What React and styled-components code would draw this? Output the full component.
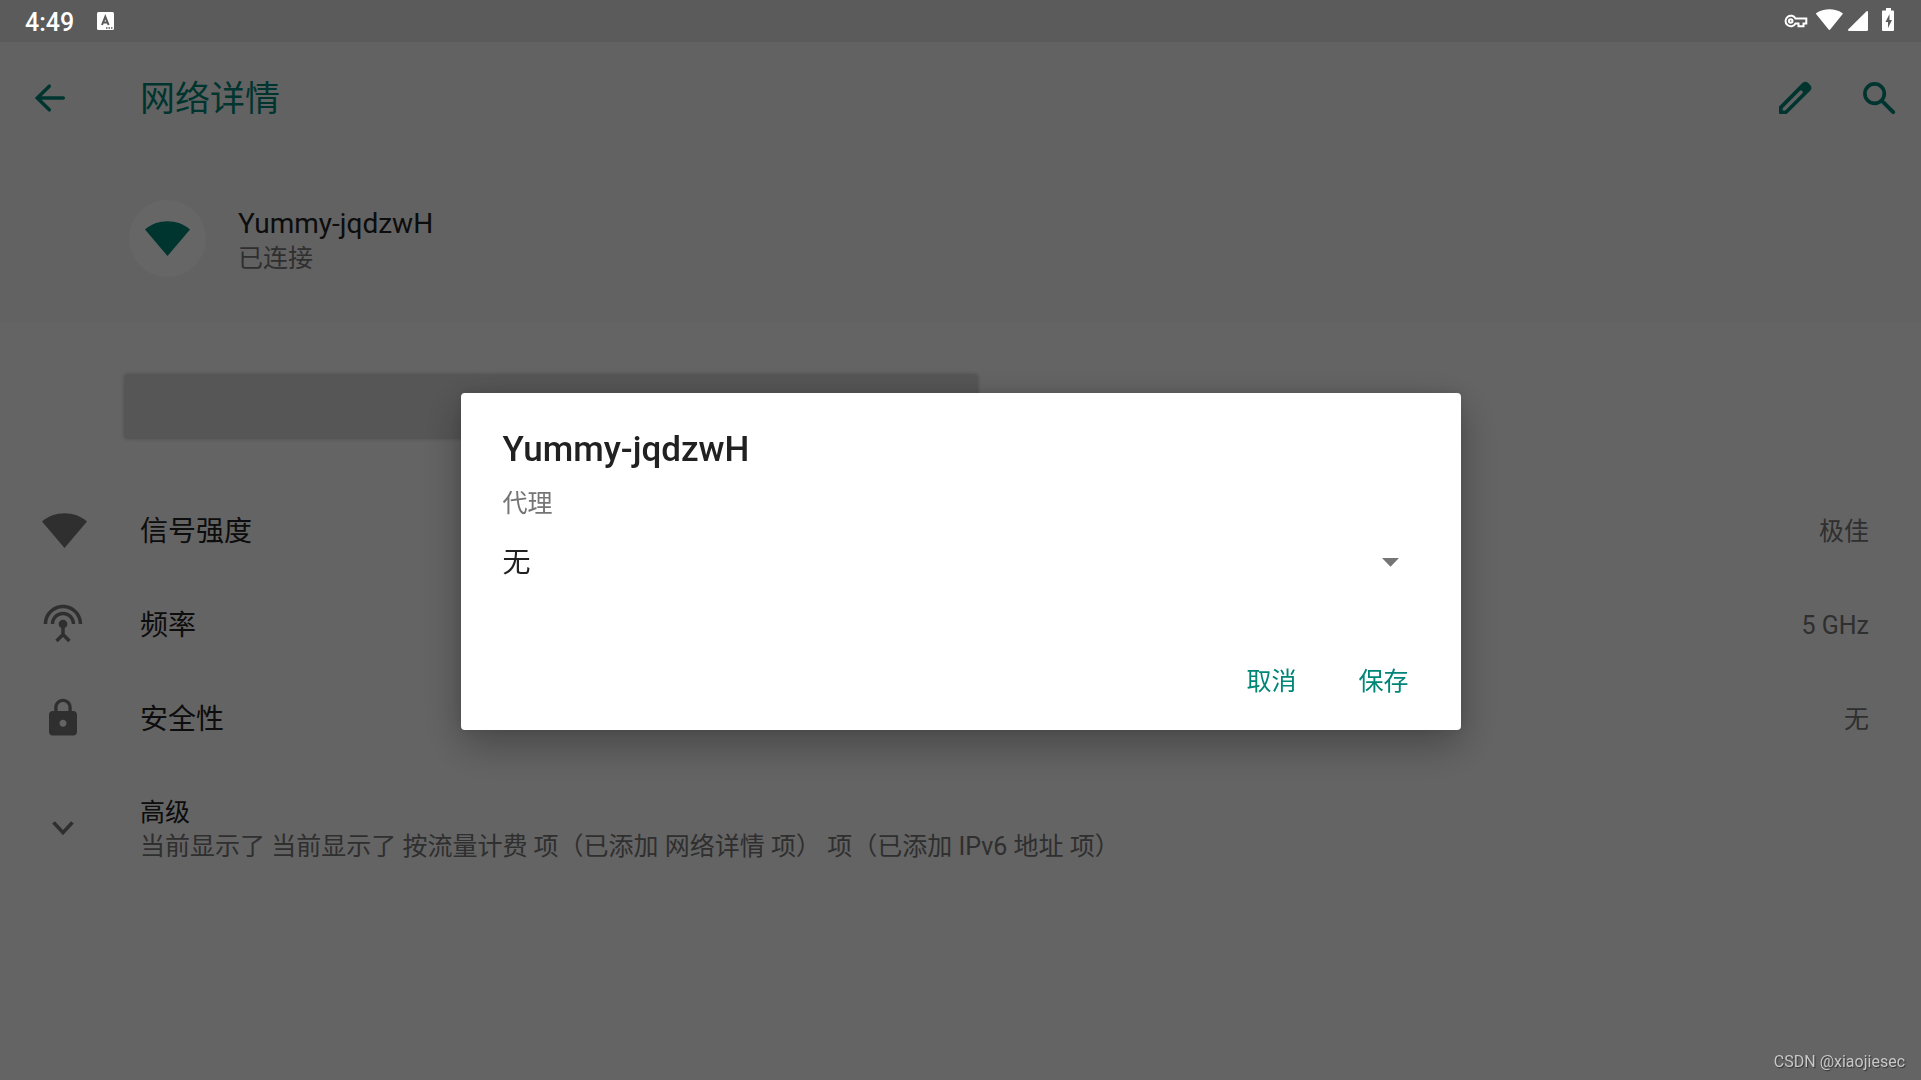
import React, { Fragment, useState } from 'react';
import styled, { createGlobalStyle } from 'styled-components';

const GlobalStyle = createGlobalStyle`
  * {
    box-sizing: border-box;
  }

  body {
    margin: 0;
    background: #fafafa;
    color: #212121;
    font-family: Roboto, 'Noto Sans CJK SC', sans-serif;
    font-size: 28px;
    line-height: 34px;
  }

  button,
  select {
    font-family: inherit;
    cursor: pointer;
  }

  svg {
    display: block;
    flex: none;
    overflow: visible;
  }
`;

const Screen = styled.div`
  display: flex;
  flex-direction: column;
  min-height: 100vh;
`;

const StatusBar = styled.header`
  position: relative;
  z-index: 2;
  display: flex;
  align-items: center;
  justify-content: space-between;
  height: 42px;
  padding: 0 27px 0 25px;
  background: #5b5b5b;
  color: #fff;
`;

const StatusGroup = styled.div`
  display: flex;
  align-items: center;
  gap: 23px;
`;

const Clock = styled.time`
  padding-top: 4px;
  font-size: 25px;
  font-weight: 500;
`;

const AppBar = styled.div`
  display: flex;
  align-items: center;
  height: 112px;
  padding: 0 21px 0 28px;
  background: #f5f5f5;
  color: #008577;
`;

const PageTitle = styled.h1`
  flex: 1;
  margin: 0 0 0 70px;
  padding-top: 4px;
  font-size: 35px;
  font-weight: 400;
  line-height: 42px;
`;

const Actions = styled.div`
  display: flex;
  gap: 42px;
`;

const IconButton = styled.button`
  padding: 0;
  border: 0;
  background: none;
  color: inherit;
`;

const NetworkHeader = styled.section`
  display: flex;
  align-items: center;
  gap: 32px;
  height: 168px;
  padding-left: 129px;
  background: #f5f5f5;
`;

const Avatar = styled.div`
  display: flex;
  align-items: center;
  justify-content: center;
  width: 77px;
  height: 77px;
  border-radius: 50%;
  background: #fff;
  color: #008577;
`;

const NetworkInfo = styled.div`
  padding-top: 6px;
  line-height: 35px;
`;

const Summary = styled.div`
  color: #757575;
  font-size: 25px;
`;

const ButtonRow = styled.div`
  display: grid;
  grid-template-columns: 1fr 1fr;
  gap: 8px;
  padding: 52px 82px 44px 124px;
`;

const WideButton = styled.button`
  height: 65px;
  border: 0;
  border-radius: 4px;
  background: #d6d6d6;
  box-shadow: 0 0 4px rgba(0, 0, 0, 0.2);
`;

const List = styled.ul`
  margin: 0;
  padding: 0;
  list-style: none;
`;

const Row = styled.li`
  display: flex;
  align-items: center;
  height: ${({ $tall }) => ($tall ? 126 : 94)}px;
  padding: 0 52px 0 42px;
`;

const RowIcon = styled.div`
  width: 42px;
  margin-right: 56px;
  color: #757575;
`;

const RowText = styled.div`
  display: flex;
  flex: 1;
  flex-direction: ${({ $stacked }) => ($stacked ? 'column' : 'row')};
  justify-content: space-between;
  padding-top: 4px;
`;

const AdvancedTitle = styled.div`
  font-size: 25px;
`;

const Scrim = styled.div`
  position: fixed;
  inset: 0;
  z-index: 1;
  display: flex;
  align-items: center;
  justify-content: center;
  padding-top: 42px;
  background: rgba(0, 0, 0, 0.6);
`;

const Dialog = styled.form`
  width: 1000px;
  max-width: 90%;
  padding: 36px 43px 19px 42px;
  border-radius: 4px;
  background: #fff;
  box-shadow: 0 14px 42px rgba(0, 0, 0, 0.3), 0 0 14px rgba(0, 0, 0, 0.1);
`;

const DialogTitle = styled.h2`
  margin: 0 0 16px;
  font-size: 35px;
  font-weight: 500;
  line-height: 42px;
`;

const FieldLabel = styled.label`
  display: block;
  color: #757575;
  font-size: 25px;
`;

const SelectBox = styled.div`
  display: flex;
  align-items: center;
  margin: 21px 19px 0 0;

  svg {
    pointer-events: none;
    margin-left: -17px;
    color: #757575;
  }
`;

const Select = styled.select`
  flex: 1;
  height: 42px;
  padding: 0;
  border: 0;
  appearance: none;
  background: none;
  color: #212121;
  font-size: 28px;
`;

const DialogActions = styled.div`
  display: flex;
  justify-content: flex-end;
  gap: 34px;
  margin: 64px -5px 0 0;
`;

const TextButton = styled.button`
  height: 63px;
  padding: 0 14px;
  border: 0;
  background: none;
  color: #008577;
  font-size: 25px;
`;

const Watermark = styled.div`
  position: fixed;
  right: 16px;
  bottom: 8px;
  z-index: 2;
  color: #c8c8c8;
  font-size: 16px;
  line-height: 20px;
  text-shadow: 1px 1px 1px #333;
`;

const Icon = ({ d }) => (
  <svg width="42" height="42" viewBox="0 0 24 24" fill="currentColor" aria-hidden="true">
    <path fillRule="evenodd" d={d} />
  </svg>
);

const WifiIcon = () => (
  <svg width="45" height="35" viewBox="0 0 45 35" fill="currentColor" aria-hidden="true">
    <path d="M0 8.4C6.2 3.2 14 .3 22.5.3S38.8 3.2 45 8.4L22.5 35z" />
  </svg>
);

const antenna = 'M12 5c-3.87 0-7 3.13-7 7h2c0-2.76 2.24-5 5-5s5 2.24 5 5h2c0-3.87-3.13-7-7-7zm1 9.29c.88-.39 1.5-1.26 1.5-2.29 0-1.38-1.12-2.5-2.5-2.5S9.5 10.62 9.5 12c0 1.02.62 1.9 1.5 2.29v3.3L7.59 21 9 22.41l3-3 3 3L16.41 21 13 17.59v-3.3zM12 1C5.93 1 1 5.93 1 12h2c0-4.97 4.03-9 9-9s9 4.03 9 9h2c0-6.07-4.93-11-11-11z';
const lock = 'M18 8h-1V6c0-2.76-2.24-5-5-5S7 3.24 7 6v2H6c-1.1 0-2 .9-2 2v10c0 1.1.9 2 2 2h12c1.1 0 2-.9 2-2V10c0-1.1-.9-2-2-2zM12 17c-1.1 0-2-.9-2-2s.9-2 2-2 2 .9 2 2-.9 2-2 2zM15.1 8H8.9V6c0-1.71 1.39-3.1 3.1-3.1s3.1 1.39 3.1 3.1z';
const expand = 'M16.6 8.1L12 13.1 7.4 8.1 5.8 9.4 12 16.1l6.200-6.700z';

const rows = [
  { title: '信号强度', value: '极佳', icon: <WifiIcon /> },
  { title: '频率', value: '5 GHz', icon: <Icon d={antenna} /> },
  { title: '安全性', value: '无', icon: <Icon d={lock} /> },
];

const StatusIcons = () => (
  <svg width="109" height="26" viewBox="1785 8 109 26" fill="currentColor" aria-hidden="true">
    <g fill="none" stroke="currentColor" strokeWidth="2">
      <path d="M1795.500 18.500a5.300 5.300 0 1 0 0 5h3v2.700h5v-2.700h2.800v-5z" />
      <circle cx="1790.700" cy="21" r="1.800" />
    </g>
    <path d="M1816.300 14.300c-.5-.6-.4-1 .2-1.400 7.600-5 18.200-5 25.800 0 .6.4.7.8.2 1.400L1830.200 29.600q-.8.800-1.600 0z" />
    <path d="M1868 12v17.500q0 1.500-1.500 1.500h-17.500q-1.700-.3-.6-1.700l17.900-17.900q1.400-1 1.700.6z" />
    <path fillRule="evenodd" d="M1886 8h5v2.500h2q1 0 1 1v18.500q0 1-1 1h-10q-1 0-1-1v-18.500q0-1 1-1h3zM1889.500 14l-4 8h2.500v6l4-8h-2.500z" />
  </svg>
);

const App = () => {
  const [proxy, setProxy] = useState('none');

  return (
    <Fragment>
      <GlobalStyle />
      <Screen>
        <StatusBar>
          <StatusGroup>
            <Clock>4:49</Clock>
            <svg width="17" height="18" viewBox="0 0 17 18" aria-hidden="true">
              <rect width="17" height="18" rx="1.5" fill="#fff" />
              <path d="M5 13L8.300 4.800 11.600 13M6.200 10.500h4.200" fill="none" stroke="#5b5b5b" strokeWidth="2" />
              <path d="M9 15.200h1.500v1.500H9zm2.500 0H13v1.500h-1.500zm2.500 0h1.500v1.500H14z" fill="#5b5b5b" />
            </svg>
          </StatusGroup>
          <StatusIcons />
        </StatusBar>
        <AppBar>
          <IconButton type="button" aria-label="返回">
            <svg width="42" height="42" viewBox="0 0 42 42" fill="none" stroke="currentColor" strokeWidth="3.5" strokeLinecap="round" aria-hidden="true">
              <path d="M35.300 21H9.500M21.300 9.200L9.300 21l12 11.800" />
            </svg>
          </IconButton>
          <PageTitle>网络详情</PageTitle>
          <Actions>
            <IconButton type="button" aria-label="修改">
              <svg width="42" height="42" viewBox="0 0 42 42" aria-hidden="true">
                <path
                  fill="currentColor"
                  fillRule="evenodd"
                  d="M5 29.500L28.300 6.100q3-2.600 6 0l1.900 2q2.500 2.900 0 5.700L12.700 37H6q-1 0-1-1zM8.700 31.200v2.300h2.500L28.700 16q.5-1-.5-2l-.3-.3q-1-.8-1.900 0z"
                />
              </svg>
            </IconButton>
            <IconButton type="button" aria-label="搜索">
              <svg width="42" height="42" viewBox="0 0 42 42" fill="none" stroke="currentColor" strokeWidth="3.7" aria-hidden="true">
                <circle cx="16.600" cy="16.600" r="9.700" />
                <path d="M24 24l2 2" />
                <path d="M26.200 26.200l9 9" strokeWidth="4" strokeLinecap="round" />
              </svg>
            </IconButton>
          </Actions>
        </AppBar>
        <NetworkHeader>
          <Avatar>
            <WifiIcon />
          </Avatar>
          <NetworkInfo>
            <div>Yummy-jqdzwH</div>
            <Summary>已连接</Summary>
          </NetworkInfo>
        </NetworkHeader>
        <ButtonRow>
          <WideButton type="button" aria-label="取消保存" />
        </ButtonRow>
        <List>
          {rows.map(({ title, value, icon }) => (
            <Row key={title}>
              <RowIcon>{icon}</RowIcon>
              <RowText>
                <div>{title}</div>
                <Summary>{value}</Summary>
              </RowText>
            </Row>
          ))}
          <Row $tall>
            <RowIcon>
              <Icon d={expand} />
            </RowIcon>
            <RowText $stacked>
              <AdvancedTitle>高级</AdvancedTitle>
              <Summary>
                当前显示了 当前显示了 按流量计费 项（已添加 网络详情 项） 项（已添加 IPv6 地址 项）
              </Summary>
            </RowText>
          </Row>
        </List>
      </Screen>
      <Scrim>
        <Dialog role="dialog" aria-labelledby="dialog-title" onSubmit={e => e.preventDefault()}>
          <DialogTitle id="dialog-title">Yummy-jqdzwH</DialogTitle>
          <FieldLabel htmlFor="proxy">代理</FieldLabel>
          <SelectBox>
            <Select id="proxy" value={proxy} onChange={e => setProxy(e.target.value)}>
              <option value="none">无</option>
            </Select>
            <svg width="17" height="9" viewBox="0 0 17 9" fill="currentColor" aria-hidden="true">
              <path d="M0 0h17L8.500 8.700z" />
            </svg>
          </SelectBox>
          <DialogActions>
            <TextButton type="button">取消</TextButton>
            <TextButton type="submit">保存</TextButton>
          </DialogActions>
        </Dialog>
      </Scrim>
      <Watermark>CSDN @xiaojiesec</Watermark>
    </Fragment>
  );
};

export default App;
